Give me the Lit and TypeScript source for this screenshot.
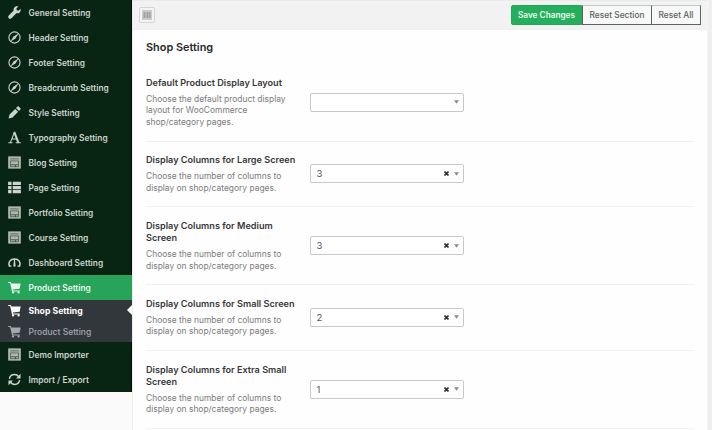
import { LitElement, html, css, svg } from "lit";
import { customElement, property } from "lit/decorators.js";

const icons: Record<string, unknown> = {
  wrench: svg`<path d="M13.400 2.900 11.300 5 9.500 4.500 9 2.700 11.100.6C9.400 0 7.300.5 6.400 2.100c-.5.900-.6 1.900-.3 2.800L.8 10.200c-.8.800-.8 2.100 0 2.900s2.100.8 2.900 0L9 7.800c1.200.3 2.600.1 3.500-.8 1.100-1.100 1.500-2.700.9-4.100z"/>`,
  compass: svg`<circle cx="7" cy="7" r="6" fill="none" stroke="currentColor" stroke-width="1.200"/><path d="M11.300 2.700 8.100 8.100 2.700 11.300 5.900 5.900z"/>`,
  pencil: svg`<path d="M.6 13.400 1.700 9.100 7.700 3.100l3.200 3.200-6 6zM8.600 2.200l1.500-1.500c.5-.5 1.100-.5 1.600 0l1.600 1.600c.5.5.5 1.100 0 1.600l-1.500 1.500z"/>`,
  letter: svg`<path fill="none" stroke="currentColor" stroke-width="1.100" d="M6.800 1.600 2.600 12.500M.4 12.700h4.400M8.400 12.700h5.300M4 8.700h5.400"/><path d="M6.300.7h1.500l4.600 11.900h-2.300L6 2.400z"/>`,
  grid: svg`<path d="M.2.400h13.600v13.200H.2z" opacity=".85"/><path fill="none" stroke="#082413" stroke-opacity=".6" stroke-width=".9" d="M2.300 3.100h9.400M2.700 5.300h8.600v6.200H2.700z"/><path fill="#082413" fill-opacity=".6" d="M3 8.900h8v1H3zM7.400 9.500h1.300v2H7.400z"/>`,
  list: svg`<path d="M.1.800h3.700v3.500H.1zM5.100.800h8.800v3.500H5.100zM.1 5.300h3.700v3.500H.1zM5.100 5.300h8.800v3.500H5.100zM.1 9.800h3.700v3.500H.1zM5.100 9.800h8.800v3.500H5.100z"/>`,
  gauge: svg`<path fill="none" stroke="currentColor" stroke-width="1.700" d="M1.700 11.300C-.2 6.500 2.500 3.300 7 3.300s7.200 3.200 5.300 8"/><path d="M6.500 3.500h1l.7 6.900a1.200 1.200 0 0 1-2.400 0zM1 10.200h2.700v1.500H1.300zM13 10.200h-2.700v1.500h2.400z"/>`,
  cart: svg`<path d="M.2 1h2.900l.6 1.700h10l-1.200 5.700-7.300.8.200.9h7.300v1.100H4.300L2.300 2.200H.2z"/><circle cx="5.400" cy="12.300" r="1.200"/><circle cx="11.400" cy="12.300" r="1.200"/>`,
  refresh: svg`<path fill="none" stroke="currentColor" stroke-width="1.600" d="M1.500 6.300C2 3.500 4.200 1.700 7 1.700c1.900 0 3.500.9 4.500 2.300M12.500 7.700c-.5 2.800-2.700 4.600-5.500 4.600-1.900 0-3.500-.9-4.500-2.300"/><path d="M13.500.8v5H8.700zM.5 13.200v-5h4.800z"/>`,
};

interface Entry { icon: string; label: string; active?: boolean; children?: Entry[]; }

const menu: Entry[] = [
  { icon: "wrench", label: "General Setting" },
  { icon: "compass", label: "Header Setting" },
  { icon: "compass", label: "Footer Setting" },
  { icon: "compass", label: "Breadcrumb Setting" },
  { icon: "pencil", label: "Style Setting" },
  { icon: "letter", label: "Typography Setting" },
  { icon: "grid", label: "Blog Setting" },
  { icon: "list", label: "Page Setting" },
  { icon: "grid", label: "Portfolio Setting" },
  { icon: "grid", label: "Course Setting" },
  { icon: "gauge", label: "Dashboard Setting" },
  {
    icon: "cart", label: "Product Setting", active: true,
    children: [
      { icon: "cart", label: "Shop Setting", active: true },
      { icon: "cart", label: "Product Setting" },
    ],
  },
  { icon: "grid", label: "Demo Importer" },
  { icon: "refresh", label: "Import / Export" },
];

const columnsHelp = ["Choose the number of columns to", "display on shop/category pages."];
const fields = [
  { title: ["Default Product Display Layout"], help: ["Choose the default product display", "layout for WooCommerce", "shop/category pages."], value: "" },
  { title: ["Display Columns for Large Screen"], help: columnsHelp, value: "3" },
  { title: ["Display Columns for Medium", "Screen"], help: columnsHelp, value: "3" },
  { title: ["Display Columns for Small Screen"], help: columnsHelp, value: "2" },
  { title: ["Display Columns for Extra Small", "Screen"], help: columnsHelp, value: "1" },
];

@customElement("option-menu")
class OptionMenu extends LitElement {
  static styles = css`
    :host { display: block; width: 132px; height: 392px; flex: none; box-sizing: border-box; padding-top: 0.400px; background: #082413; border-right: 1px solid #031008; color: #ccd4ce; font-size: 8.350px; font-weight: 600; }
    .item { display: flex; align-items: center; height: 25px; padding-left: 8px; gap: 7.500px; white-space: nowrap; box-sizing: border-box; }
    .item.active { background: #27a35a; color: #e6f8ec; margin-right: -1px; }
    .icon { width: 13px; height: 13px; fill: currentColor; flex: none; }
    .sub { background: #32373c; padding-bottom: 0.5px; margin-right: -1px; }
    .sub .item { height: 20.500px; color: #a3a8ac; font-weight: 500; font-size: 8.500px; position: relative; }
    .sub .item.active { background: none; color: #fff; font-weight: 700; font-size: 8.700px; margin-right: 0; height: 21px; }
    .sub .item.active::after { content: ""; position: absolute; right: 0; top: 5px; border: 5px solid transparent; border-left: 0; border-right-color: #fcfcfc; }
  `;
  private row(e: Entry): unknown {
    return html`<div class="item ${e.active ? "active" : ""}">
        <svg class="icon" viewBox="0 0 14 14">${icons[e.icon]}</svg><span>${e.label}</span>
      </div>
      ${e.children ? html`<div class="sub">${e.children.map((c) => this.row(c))}</div>` : ""}`;
  }
  render() { return menu.map((e) => this.row(e)); }
}

@customElement("select-box")
class SelectBox extends LitElement {
  @property() value = "";
  static styles = css`
    :host { display: flex; align-items: center; width: 154px; height: 19px; box-sizing: border-box; border: 1px solid #c8c8c8; border-radius: 2px; padding: 0 4px 0 5.500px; font-size: 9.500px; color: #555; background: #fff; }
    .value { flex: 1; }
    .clear { width: 5px; height: 5px; margin-right: 5px; stroke: #333; stroke-width: 1.600; }
    .arrow { width: 5px; height: 4px; fill: #8b8b8b; }
  `;
  render() {
    return html`<span class="value">${this.value}</span>
      ${this.value ? html`<svg class="clear" viewBox="0 0 5 5"><path d="M.5.5l4 4M4.500.5l-4 4"/></svg>` : ""}
      <svg class="arrow" viewBox="0 0 6 4"><path d="M0 0h6L3 4z"/></svg>`;
  }
}

@customElement("app-root")
class AppRoot extends LitElement {
  static styles = css`
    :host { display: flex; align-items: flex-start; width: 712px; height: 430px; overflow: hidden; background: #fafafa; font-family: Inter, "Liberation Sans", sans-serif; }
    .panel { flex: 1; height: 430px; box-sizing: border-box; background: #fefefe; border-left: 1px solid #ececec; }
    .edge { width: 4px; height: 430px; background: #efefef; border-left: 1px solid #f6f6f6; }
    .bar { display: flex; align-items: center; justify-content: space-between; height: 30px; box-sizing: border-box; padding: 0 6px 0 6px; background: #f2f2f2; border-top: 1px solid #eaeaea; border-bottom: 1px solid #f0f0f0; }
    .toggle { display: flex; align-items: center; justify-content: center; width: 14px; height: 14px; border: 1px solid #d4d4d4; border-radius: 2px; background: #f4f4f4; }
    .toggle svg { width: 10px; height: 10px; }
    .actions { display: flex; }
    .button { display: flex; align-items: center; justify-content: center; box-sizing: border-box; height: 20px; font-size: 8.400px; font-weight: 500; color: #5e5e5e; background: #f7f8f8; border: 1px solid #606060; border-top-color: #c4c4c4; white-space: nowrap; }
    .save { width: 71px; background: #24af5d; color: #eafbf0; border-color: #24a658; font-size: 8.250px; font-weight: 600; border-radius: 2px 0 0 2px; }
    .section { width: 70px; }
    .all { width: 49px; border-left: 0; }
    .body { padding: 0 13px; }
    .heading { height: 33.500px; padding-top: 9px; box-sizing: border-box; font-size: 10.900px; line-height: 16px; font-weight: 600; color: #2a2a2a; }
    .field { display: flex; align-items: center; box-sizing: border-box; height: 65.500px; border-bottom: 1px solid #f1f1f1; }
    .field:first-of-type, .field.tall { height: 78px; }
    .copy { width: 164px; flex: none; white-space: nowrap; padding-top: 1px; }
    .title { font-size: 9.130px; line-height: 12px; font-weight: 600; color: #383838; }
    .help { margin-top: 5px; font-size: 8.430px; line-height: 11.300px; color: #7c7c7c; }
  `;
  render() {
    return html`<option-menu></option-menu>
      <main class="panel">
        <div class="bar">
          <span class="toggle"><svg viewBox="0 0 10 10"><path fill="#cacaca" d="M0 0h10v10H0z"/><path fill="#a0a0a0" d="M1.500 2h2v6h-2zM4.500 2h1.700v6H4.500zM6.800 2h1.700v6H6.800z"/></svg></span>
          <div class="actions">
            <span class="button save">Save Changes</span><span class="button section">Reset Section</span><span class="button all">Reset All</span>
          </div>
        </div>
        <div class="body">
          <div class="heading">Shop Setting</div>
          ${fields.map((f) => html`<div class="field ${f.title.length + f.help.length > 3 - 0 ? "tall" : ""}">
            <div class="copy">
              <div class="title">${f.title.map((t) => html`<div>${t}</div>`)}</div>
              <div class="help">${f.help.map((t) => html`<div>${t}</div>`)}</div>
            </div>
            <select-box .value=${f.value}></select-box>
          </div>`)}
        </div>
      </main>
      <div class="edge"></div>`;
  }
}
